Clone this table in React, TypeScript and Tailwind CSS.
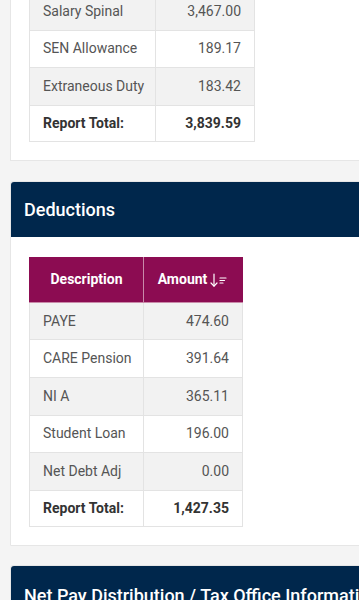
import React from 'react';

const earnings = [
  { label: 'Salary Spinal', amount: '3,467.00' },
  { label: 'SEN Allowance', amount: '189.17' },
  { label: 'Extraneous Duty', amount: '183.42' },
];

const deductions = [
  { label: 'PAYE', amount: '474.60' },
  { label: 'CARE Pension', amount: '391.64' },
  { label: 'NI A', amount: '365.11' },
  { label: 'Student Loan', amount: '196.00' },
  { label: 'Net Debt Adj', amount: '0.00' },
];

function SortIcon() {
  return (
    <svg width="18" height="16" viewBox="0 0 18 16" fill="none" stroke="currentColor" strokeWidth="1.2" strokeLinecap="round">
      <path d="M4 2v12" />
      <path d="M1 11l3 3.2 3-3.2" />
      <path d="M10 6h6" />
      <path d="M10 8.5h4.5" />
      <path d="M10 11h3" />
    </svg>
  );
}

function Rows({ rows, total }: { rows: { label: string; amount: string }[]; total: string }) {
  return (
    <>
      {rows.map((r, i) => (
        <tr key={r.label} className={i % 2 === 0 ? 'bg-[#f2f2f2]' : 'bg-white'}>
          <td className="h-[37.6px] border border-[#e3e3e3] px-[13px] text-left whitespace-nowrap">{r.label}</td>
          <td className="h-[37.6px] border border-[#e3e3e3] px-[13px] text-right whitespace-nowrap">{r.amount}</td>
        </tr>
      ))}
      <tr className="bg-white">
        <td className="h-[36px] border border-[#e3e3e3] px-[13px] text-left font-bold text-[#333] whitespace-nowrap">Report Total:</td>
        <td className="h-[36px] border border-[#e3e3e3] px-[13px] text-right font-bold text-[#333] whitespace-nowrap">{total}</td>
      </tr>
    </>
  );
}

export default function App() {
  return (
    <div className="h-[600px] overflow-hidden bg-[#f4f4f4] text-[14px] text-[#555] font-['Roboto',sans-serif]">
      {/* Earnings card, scrolled mostly out of view */}
      <div className="ml-[10px] w-[420px] -mt-[8px] bg-white border border-[#e6e6e6] border-t-0 px-[18px] pb-[18px]">
        <table className="border-collapse table-fixed w-[225px]">
          <colgroup>
            <col className="w-[126px]" />
            <col className="w-[99px]" />
          </colgroup>
          <tbody>
            <Rows rows={earnings} total="3,839.59" />
          </tbody>
        </table>
      </div>

      {/* Deductions */}
      <div className="ml-[10px] mt-[20px] w-[420px] bg-white border border-[#e6e6e6] rounded-t-[3px]">
        <div className="h-[55px] bg-[#00274c] px-[13px] flex items-center text-[18px] font-medium text-white rounded-t-[3px]">
          Deductions
        </div>
        <div className="px-[18px] pt-[20px] pb-[18px]">
          <table className="border-collapse table-fixed w-[213px]">
            <colgroup>
              <col className="w-[114px]" />
              <col className="w-[99px]" />
            </colgroup>
            <thead>
              <tr className="bg-[#8c0c52] text-white text-[14px] font-bold">
                <th className="h-[45px] border border-[#c98aa9] border-t-[#8c0c52] border-l-[#8c0c52] whitespace-nowrap">Description</th>
                <th className="h-[45px] border border-[#c98aa9] border-t-[#8c0c52] border-r-[#8c0c52] whitespace-nowrap">
                  <span className="inline-flex items-center gap-[3px]">
                    Amount
                    <SortIcon />
                  </span>
                </th>
              </tr>
            </thead>
            <tbody>
              <Rows rows={deductions} total="1,427.35" />
            </tbody>
          </table>
        </div>
      </div>

      {/* Net Pay Distribution */}
      <div className="ml-[10px] mt-[19px] w-[420px] bg-white border border-[#e6e6e6] rounded-t-[3px]">
        <div className="h-[55px] bg-[#00274c] px-[13px] pt-[4px] flex items-center text-[18px] font-medium text-white whitespace-nowrap rounded-t-[3px]">
          Net Pay Distribution / Tax Office Information
        </div>
      </div>
    </div>
  );
}
